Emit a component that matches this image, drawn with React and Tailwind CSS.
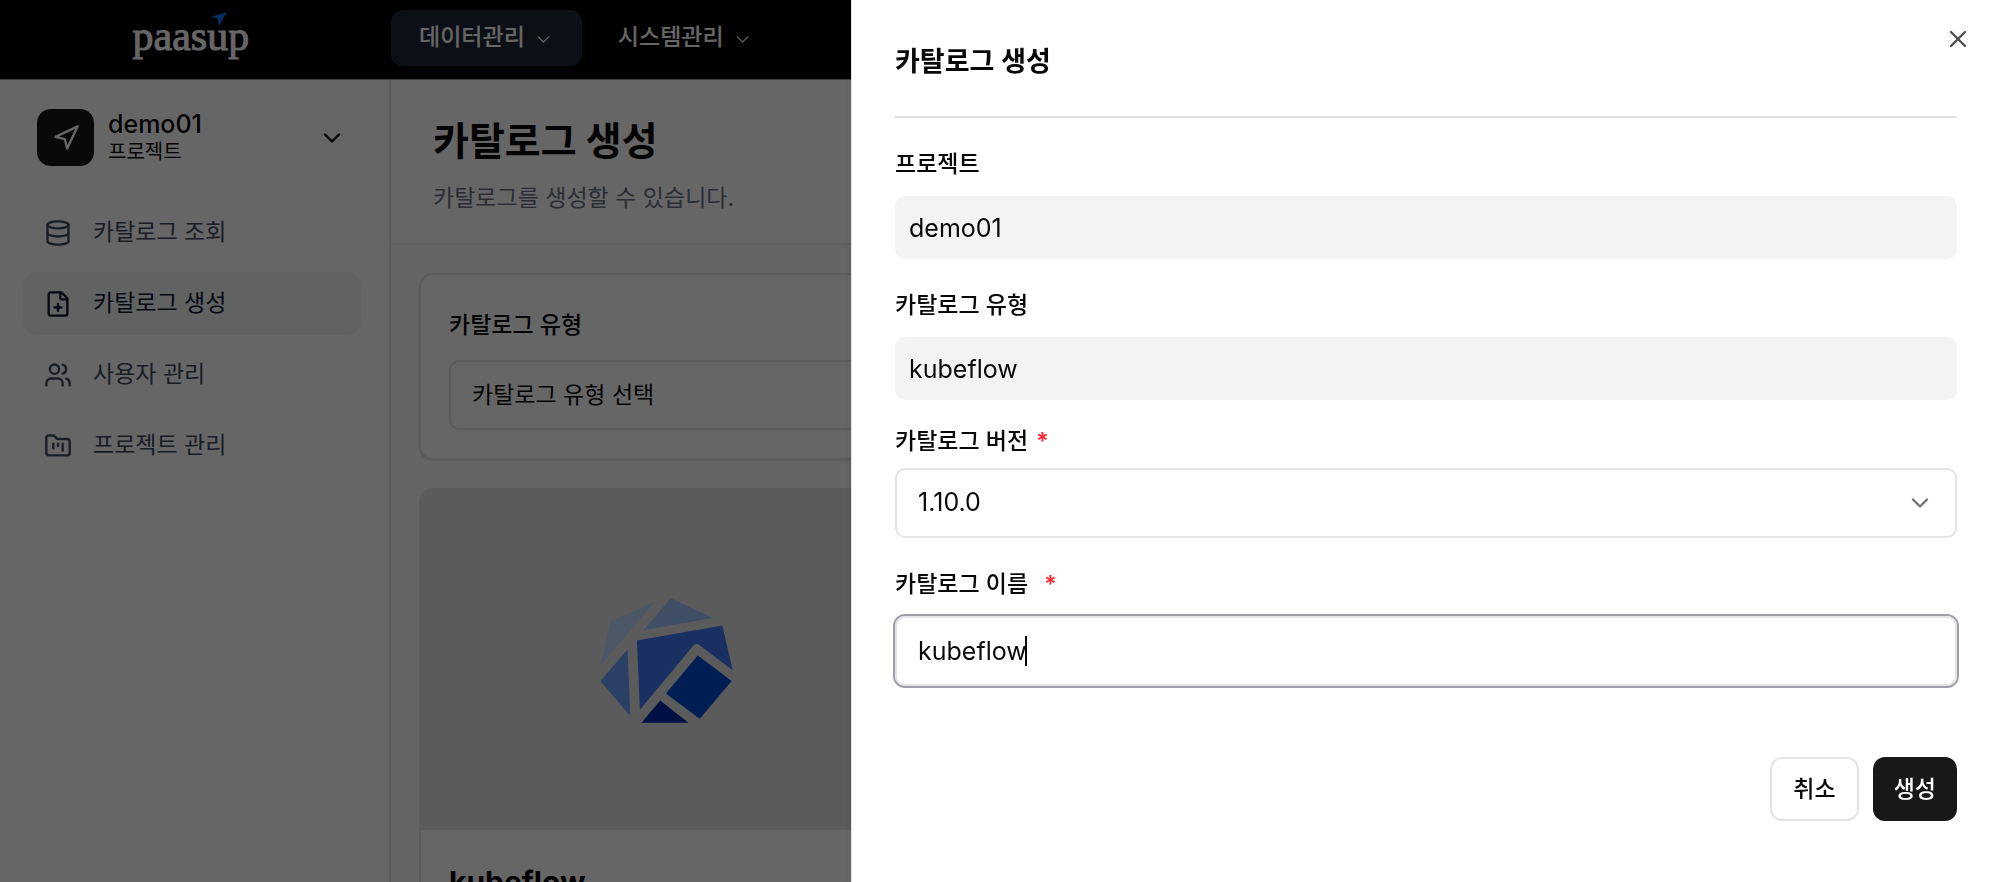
import React, { useState } from "react";
import {
  ChevronDown,
  Database,
  FilePlus,
  FolderKanban,
  Navigation,
  Users,
  X,
} from "lucide-react";

const topMenus = [
  { label: "데이터관리", active: true },
  { label: "시스템관리", active: false },
];

const sideMenus = [
  { label: "카탈로그 조회", icon: Database, active: false },
  { label: "카탈로그 생성", icon: FilePlus, active: true },
  { label: "사용자 관리", icon: Users, active: false },
  { label: "프로젝트 관리", icon: FolderKanban, active: false },
];

function PaasupLogo() {
  return (
    <a href="#" className="relative block w-[118px] text-white">
      <span className="block font-['Liberation_Serif',serif] text-[42px] leading-[48px] [-webkit-text-stroke:1px_white]">
        paasup
      </span>
      <svg
        viewBox="0 0 16 14"
        className="absolute top-0 right-6 h-[14px] w-4"
        fill="#0f72ee"
      >
        <path d="M0 4.7 16 0 8 14 6.3 6.3Z" />
      </svg>
    </a>
  );
}

function KubeflowLogo() {
  return (
    <svg viewBox="120 118 400 374" className="h-[125px] w-[133px]">
      <path fill="#bedcff" d="M285 128 152 187 121 321Z" />
      <path fill="#a1c3ff" d="M333 118 460 177 252 213Z" />
      <path fill="#6ca1ff" d="M203 272 121 367 211 472Z" />
      <path
        fill="#4279f4"
        d="M231 245 488 200 519 334 419 259Q410 252 401 260L240 453Z"
      />
      <path fill="#014bd1" d="M414 290 516 367 420 480 318 404Z" />
      <path fill="#0028aa" d="M301 425 386 492H245Z" />
    </svg>
  );
}

function Header() {
  return (
    <header className="flex h-20 shrink-0 items-center border-b border-[#999] bg-black">
      <div className="flex w-[391px] shrink-0 justify-center pr-2 pb-2">
        <PaasupLogo />
      </div>
      <nav className="flex gap-2 pb-1">
        {topMenus.map((menu) => (
          <button
            key={menu.label}
            className={`flex h-14 items-center gap-2 rounded-xl px-7 text-[23px] font-medium text-white ${
              menu.active ? "bg-[#1e2938]" : ""
            }`}
          >
            {menu.label}
            <ChevronDown size={21} strokeWidth={1.5} className="mt-1" />
          </button>
        ))}
      </nav>
    </header>
  );
}

function Sidebar() {
  return (
    <aside className="w-[391px] shrink-0 border-r-2 border-[#e5e5e5] bg-white">
      <button className="flex w-full items-center pt-[29px] pr-[43px] pl-[37px] text-left">
        <span className="flex size-[57px] items-center justify-center rounded-[14px] bg-zinc-900 text-white">
          <Navigation size={28} />
        </span>
        <span className="ml-[14px] flex-1 text-zinc-950">
          <span className="block text-[25px] leading-7 font-medium">
            demo01
          </span>
          <span className="block text-xl leading-7">프로젝트</span>
        </span>
        <ChevronDown size={28} className="text-zinc-950" />
      </button>

      <nav className="flex flex-col gap-2 pt-[35px] pr-7 pl-[23px]">
        {sideMenus.map(({ label, icon: Icon, active }) => (
          <a
            key={label}
            href="#"
            className={`flex h-[63px] items-center gap-[21px] rounded-[14px] pl-[21px] text-[23px] ${
              active ? "bg-[#f3f8f6] text-slate-900" : "text-[#3f4b5e]"
            }`}
          >
            <Icon size={28} />
            {label}
          </a>
        ))}
      </nav>
    </aside>
  );
}

function CatalogPage() {
  return (
    <main className="flex-1 bg-[#fdfdfd]">
      <div className="border-b-2 border-[#ececec] bg-white px-[42px] pt-9 pb-[29px]">
        <h1 className="text-[39px] leading-[50px] font-bold text-zinc-950">
          카탈로그 생성
        </h1>
        <p className="mt-4 text-[23px] leading-8 text-gray-500">
          카탈로그를 생성할 수 있습니다.
        </p>
      </div>

      <div className="p-7">
        <section className="rounded-[14px] border-2 border-[#e5e5e5] bg-white px-7 pt-[34px] pb-7 shadow-sm">
          <label
            htmlFor="catalogFilter"
            className="block text-[23px] leading-8 font-medium text-zinc-950"
          >
            카탈로그 유형
          </label>
          <select
            id="catalogFilter"
            className="mt-[19px] block h-[70px] w-full appearance-none rounded-[10px] border-2 border-[#e5e5e5] px-[21px] text-[23px] text-zinc-950"
          >
            <option>카탈로그 유형 선택</option>
          </select>
        </section>

        <div className="mt-7 grid grid-cols-3 gap-7">
          <article className="overflow-hidden rounded-[14px] border-2 border-[#e4e4e4] bg-white">
            <div className="flex h-[340px] items-center justify-center bg-[#e4e4e4] pr-1">
              <KubeflowLogo />
            </div>
            <h2 className="px-7 pt-8 text-[30px] leading-10 font-bold text-zinc-950">
              kubeflow
            </h2>
          </article>
        </div>
      </div>
    </main>
  );
}

function Required() {
  return <span className="font-bold text-red-500">*</span>;
}

function CreateDrawer() {
  const [version, setVersion] = useState("1.10.0");
  const [name, setName] = useState("kubeflow");

  const labelClass = "flex text-[23px] leading-8 font-medium text-zinc-950";
  const readOnlyClass =
    "mt-4 block h-[63px] w-full rounded-[10px] bg-[#f3f3f3] px-[14px] text-[25px] text-zinc-950 outline-none";

  return (
    <div
      role="dialog"
      aria-labelledby="drawerTitle"
      className="fixed inset-y-0 right-0 w-[57.45%] border-l border-zinc-200 bg-white px-[43px] pt-11 shadow-lg"
    >
      <button
        aria-label="닫기"
        className="absolute top-[25px] right-7 text-[#4d4d4d]"
      >
        <X size={28} />
      </button>

      <h2
        id="drawerTitle"
        className="border-b-2 border-[#e2e2e2] pb-9 text-[27px] leading-9 font-semibold text-zinc-950"
      >
        카탈로그 생성
      </h2>

      <form onSubmit={(e) => e.preventDefault()} className="pt-[30px]">
        <label htmlFor="project" className={labelClass}>
          프로젝트
        </label>
        <input id="project" readOnly value="demo01" className={readOnlyClass} />

        <label htmlFor="catalogType" className={`mt-[30px] ${labelClass}`}>
          카탈로그 유형
        </label>
        <input
          id="catalogType"
          readOnly
          value="kubeflow"
          className={readOnlyClass}
        />

        <label htmlFor="version" className={`mt-[25px] gap-2 ${labelClass}`}>
          카탈로그 버전 <Required />
        </label>
        <div className="relative mt-[11px]">
          <select
            id="version"
            value={version}
            onChange={(e) => setVersion(e.target.value)}
            className="block h-[70px] w-full appearance-none rounded-[10px] border-2 border-zinc-200 bg-white px-[21px] text-[25px] text-zinc-950 outline-none"
          >
            <option>1.10.0</option>
          </select>
          <ChevronDown
            size={28}
            className="pointer-events-none absolute top-[21px] right-[23px] text-neutral-500"
          />
        </div>

        <label htmlFor="name" className={`mt-[30px] gap-4 ${labelClass}`}>
          카탈로그 이름 <Required />
        </label>
        <div className="relative mt-4">
          <input
            id="name"
            value={name}
            onChange={(e) => setName(e.target.value)}
            className="block h-[70px] w-full rounded-[10px] border-2 border-zinc-200 px-[21px] text-[25px] text-zinc-950 ring-2 ring-zinc-400 outline-none"
          />
          {/* text caret */}
          <span className="absolute top-5 left-[130px] h-[30px] w-[2px] bg-zinc-950" />
        </div>

        <div className="mt-[71px] flex justify-end gap-[14px]">
          <button
            type="button"
            className="h-16 rounded-xl border-2 border-zinc-200 bg-white px-[21px] text-[23px] font-medium text-zinc-950"
          >
            취소
          </button>
          <button
            type="submit"
            className="h-16 rounded-xl bg-zinc-900 px-[21px] text-[23px] font-medium text-white"
          >
            생성
          </button>
        </div>
      </form>
    </div>
  );
}

export default function App() {
  return (
    <div className="h-screen overflow-hidden font-[Inter,'Noto_Sans_CJK_KR',sans-serif]">
      <div className="flex min-h-screen flex-col">
        <Header />
        <div className="flex flex-1">
          <Sidebar />
          <CatalogPage />
        </div>
      </div>

      <div className="fixed inset-0 bg-black/60" />
      <CreateDrawer />
    </div>
  );
}
